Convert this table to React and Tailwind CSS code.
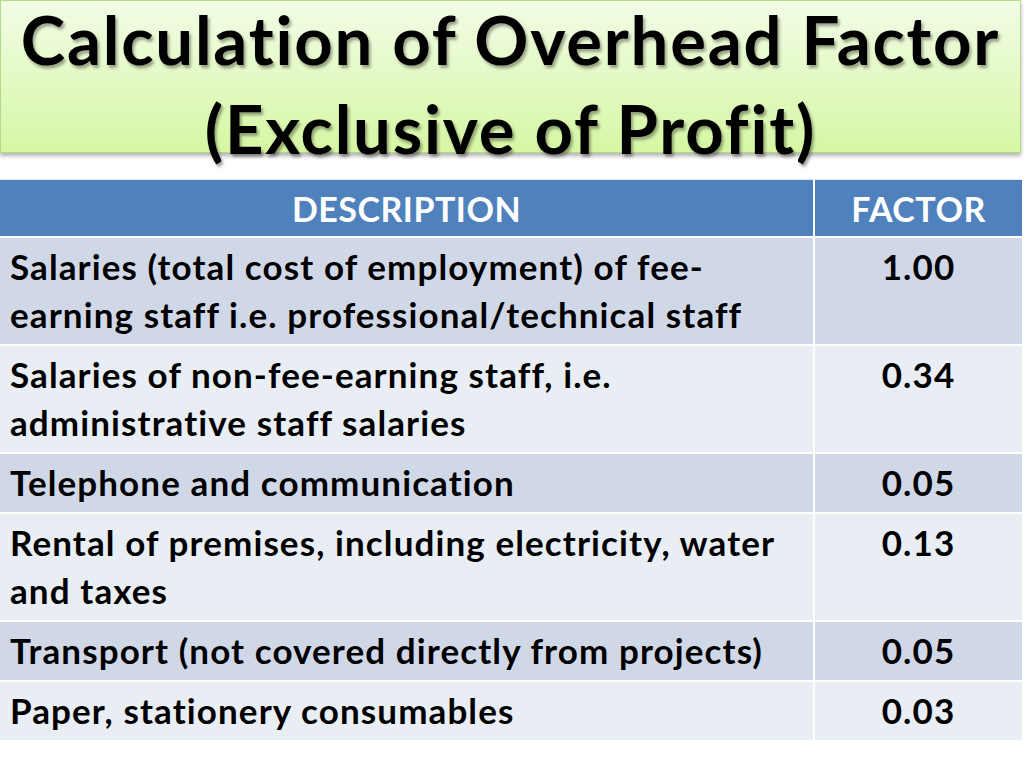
const rows = [
  { factor: '1.00', lines: ['Salaries (total cost of employment) of fee-', 'earning staff i.e. professional/technical staff'] },
  { factor: '0.34', lines: ['Salaries of non-fee-earning staff, i.e.', 'administrative staff salaries'] },
  { factor: '0.05', lines: ['Telephone and communication'] },
  { factor: '0.13', lines: ['Rental of premises, including electricity, water', 'and taxes'] },
  { factor: '0.05', lines: ['Transport (not covered directly from projects)'] },
  { factor: '0.03', lines: ['Paper, stationery consumables'] },
];

const App = () => {
  return (
    <div
      className="w-[1024px] h-[768px] bg-white overflow-hidden"
      style={{ fontFamily: 'Lato, "Open Sans", sans-serif' }}
    >
      <div className="w-[1021px] h-[153px] border border-[#b5d98a] bg-gradient-to-b from-[#f2fce6] to-[#d6f7a3] shadow-[0_3px_4px_rgba(0,0,0,0.3)] flex flex-col items-center">
        <h1 className="text-[67px] font-bold tracking-[1.8px] text-black text-center whitespace-nowrap [text-shadow:2px_3px_3px_rgba(0,0,0,0.35)]">
          <div className="leading-[76px]">Calculation of Overhead Factor</div>
          <div className="leading-[102px]">(Exclusive of Profit)</div>
        </h1>
      </div>

      <div className="mt-[26px] w-[1022px] border-t border-[#dfe6f1]">
        <div className="flex h-[56px] bg-[#4f81bd] text-white text-[34px] font-bold tracking-[0.5px]">
          <div className="w-[815px] border-r-2 border-white flex items-center justify-center">DESCRIPTION</div>
          <div className="flex-1 flex items-center justify-center">FACTOR</div>
        </div>
        {rows.map((r, i) => (
          <div
            key={i}
            className={`flex border-t-2 border-white text-[35px] leading-[48px] tracking-[1.1px] font-bold text-black ${i % 2 === 0 ? 'bg-[#d0d8e8]' : 'bg-[#e9edf4]'}`}
          >
            <div className="w-[815px] border-r-2 border-white pl-[10px] pt-[4px] pb-[6px] whitespace-nowrap">
              {r.lines.map((l, j) => (
                <div key={j}>{l}</div>
              ))}
            </div>
            <div className="flex-1 text-center pt-[4px]">{r.factor}</div>
          </div>
        ))}
      </div>
    </div>
  );
};

export default App;
